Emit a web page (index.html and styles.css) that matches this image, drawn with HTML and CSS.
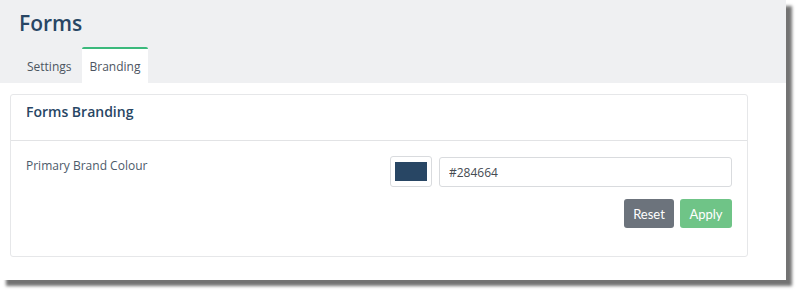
FILE: index.html
```html
<!DOCTYPE html>
<html lang="en">
<head>
    <meta charset="UTF-8">
    <meta name="viewport" content="width=device-width, initial-scale=1.0">
    <title>Forms - Branding</title>
    <link rel="stylesheet" href="styles.css">
</head>
<body>
    <div class="frame">
        <div class="page-header">
            <h1>Forms</h1>
            <div class="tabs">
                <div class="tab">Settings</div>
                <div class="tab active">Branding</div>
            </div>
        </div>

        <div class="card">
            <div class="card-header">Forms Branding</div>
            <div class="card-body">
                <div class="field-label">Primary Brand Colour</div>
                <div class="field-controls">
                    <div class="colour-row">
                        <div class="swatch"><span class="swatch-fill"></span></div>
                        <input type="text" class="text-input" value="#284664">
                    </div>
                    <div class="actions">
                        <button class="btn btn-reset">Reset</button>
                        <button class="btn btn-apply">Apply</button>
                    </div>
                </div>
            </div>
        </div>
    </div>
</body>
</html>
```

FILE: styles.css
```css
* {
    box-sizing: border-box;
    margin: 0;
    padding: 0;
}

html, body {
    height: 100%;
}

body {
    font-family: 'Open Sans', 'Noto Sans', sans-serif;
    background: #ffffff;
    padding-bottom: 12px;
}

.frame {
    width: 786px;
    height: 280px;
    background: #ffffff;
    box-shadow: 6px 6px 3px rgba(0, 0, 0, 0.55);
}

.page-header {
    background: #eff0f2;
    height: 83px;
    padding: 9px 0 0 19px;
    display: flex;
    flex-direction: column;
    justify-content: space-between;
}

h1 {
    font-size: 21px;
    font-weight: 600;
    color: #284664;
    line-height: 28px;
}

.tabs {
    display: flex;
    gap: 2px;
}

.tab {
    font-size: 12px;
    color: #4c5561;
    padding: 0 8px;
    height: 36px;
    line-height: 36px;
    border-top: 2px solid transparent;
}

.tab.active {
    background: #ffffff;
    border-top-color: #3bb97c;
    border-radius: 2px 2px 0 0;
}

.card {
    margin: 11px 0 0 10px;
    width: 738px;
    border: 1px solid #e6e7e9;
    border-radius: 3px;
}

.card-header {
    height: 46px;
    padding: 7px 15px 0 15px;
    font-size: 14px;
    font-weight: 600;
    color: #284664;
    border-bottom: 1px solid #e2e3e5;
}

.card-body {
    display: flex;
    justify-content: space-between;
    padding: 15px 15px 28px 15px;
}

.field-label {
    font-size: 12px;
    color: #4c5a6a;
    padding-top: 1px;
}

.field-controls {
    width: 342px;
}

.colour-row {
    display: flex;
    gap: 7px;
}

.swatch {
    width: 42px;
    height: 31px;
    border: 1px solid #d9dbde;
    border-radius: 3px;
    padding: 5px 4px;
}

.swatch-fill {
    display: block;
    width: 100%;
    height: 100%;
    background: #284664;
}

.text-input {
    flex: 1;
    height: 30px;
    margin-top: 1px;
    border: 1px solid #d9dbde;
    border-radius: 3px;
    padding: 0 9px;
    font-family: 'Open Sans', 'Noto Sans', sans-serif;
    font-size: 12px;
    color: #454b52;
    outline: none;
}

.actions {
    display: flex;
    justify-content: flex-end;
    gap: 6px;
    margin-top: 12px;
}

.btn {
    height: 29px;
    border: none;
    border-radius: 3px;
    color: #ffffff;
    font-family: 'Lato', 'Open Sans', sans-serif;
    font-size: 13px;
    padding: 0 9px;
}

.btn-reset {
    background: #6c737c;
    width: 50px;
}

.btn-apply {
    background: #6fc487;
    width: 52px;
}
```
